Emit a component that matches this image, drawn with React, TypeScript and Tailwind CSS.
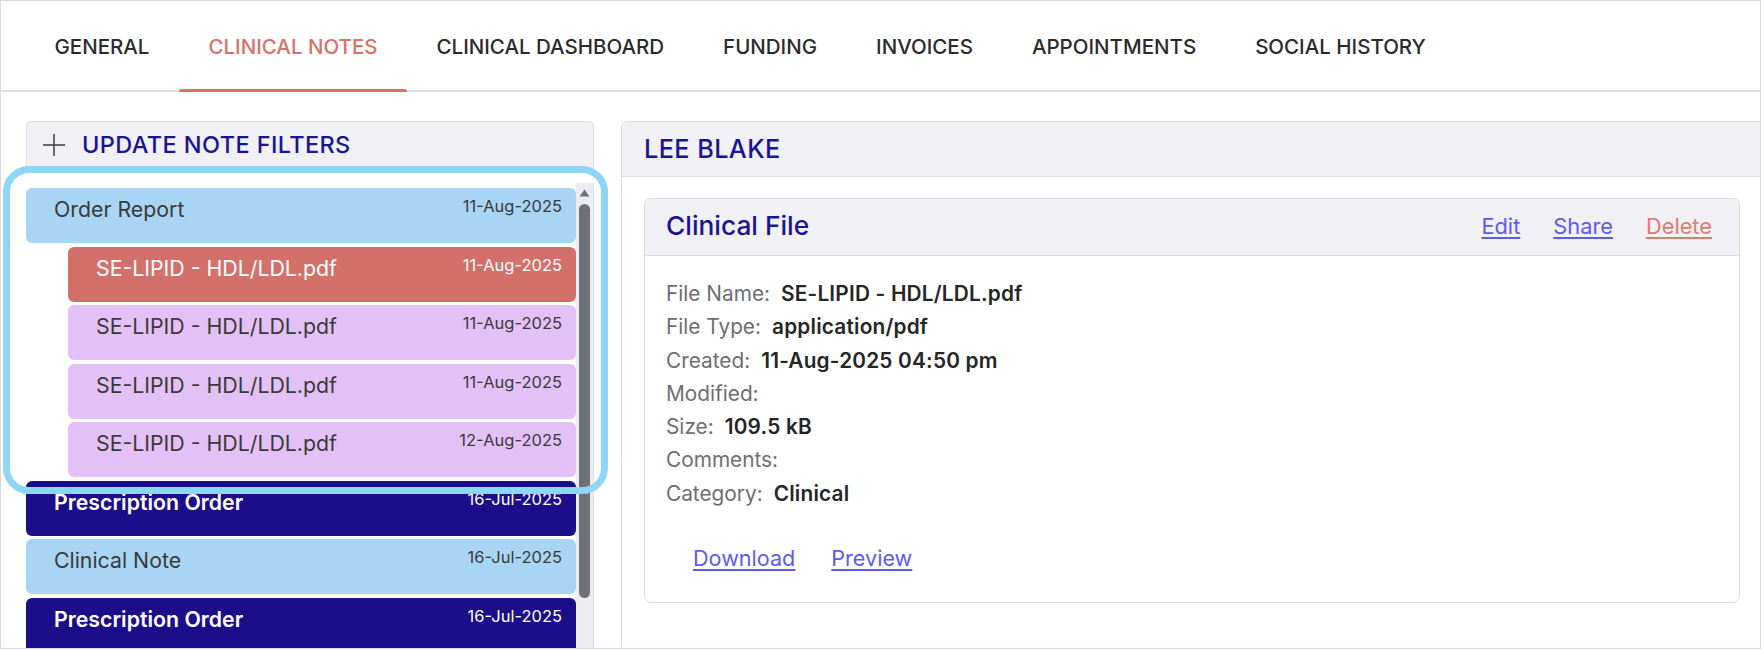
import React from "react";

type Kind = "parent" | "active" | "child" | "navy";

const notes: { label: string; date: string; kind: Kind }[] = [
  { label: "Order Report", date: "11-Aug-2025", kind: "parent" },
  { label: "SE-LIPID - HDL/LDL.pdf", date: "11-Aug-2025", kind: "active" },
  { label: "SE-LIPID - HDL/LDL.pdf", date: "11-Aug-2025", kind: "child" },
  { label: "SE-LIPID - HDL/LDL.pdf", date: "11-Aug-2025", kind: "child" },
  { label: "SE-LIPID - HDL/LDL.pdf", date: "12-Aug-2025", kind: "child" },
  { label: "Prescription Order", date: "16-Jul-2025", kind: "navy" },
  { label: "Clinical Note", date: "16-Jul-2025", kind: "parent" },
  { label: "Prescription Order", date: "16-Jul-2025", kind: "navy" },
];

const kindClass: Record<Kind, string> = {
  parent: "bg-[#a7d5f3] text-[#3a3a3a]",
  active: "ml-[42px] bg-[#d4706a] text-white",
  child: "ml-[42px] bg-[#e3c1f7] text-[#3a3a3a]",
  navy: "bg-[#1c0d8a] text-white",
};

const tabs = [
  "GENERAL",
  "CLINICAL NOTES",
  "CLINICAL DASHBOARD",
  "FUNDING",
  "INVOICES",
  "APPOINTMENTS",
  "SOCIAL HISTORY",
];

const details: [string, string][] = [
  ["File Name:", "SE-LIPID - HDL/LDL.pdf"],
  ["File Type:", "application/pdf"],
  ["Created:", "11-Aug-2025 04:50 pm"],
  ["Modified:", ""],
  ["Size:", "109.5 kB"],
  ["Comments:", ""],
  ["Category:", "Clinical"],
];

function NoteRow({ label, date, kind }: { label: string; date: string; kind: Kind }) {
  return (
    <div
      className={`flex h-[55px] shrink-0 items-start justify-between rounded-[6px] pl-[28px] pr-[14px] pt-[6px] ${kindClass[kind]}`}
    >
      <span className={`text-[21.3px] leading-[1.5] ${kind === "navy" ? "font-semibold" : ""}`}>
        {label}
      </span>
      <span className="text-[16.5px] leading-[1.5]">{date}</span>
    </div>
  );
}

export default function App() {
  return (
    <div
      className="relative h-[649px] w-[1761px] overflow-hidden border border-[#d9d9dd] bg-white"
      style={{ fontFamily: "Inter, 'Noto Sans', sans-serif" }}
    >
      {/* Tabs */}
      <nav className="flex h-[91px] border-b-2 border-[#e1e1e7] pl-[24px]">
        {tabs.map((t) => (
          <div
            key={t}
            className={`relative flex h-full items-center px-[29.5px] pt-[4px] text-[20.5px] font-medium ${
              t === "CLINICAL NOTES" ? "text-[#d6716b]" : "text-[#2b2b2b]"
            }`}
          >
            {t}
            {t === "CLINICAL NOTES" && (
              <div className="absolute -bottom-[2px] left-0 h-[3px] w-full rounded-t-[2px] bg-[#d6716b]" />
            )}
          </div>
        ))}
      </nav>

      <div className="flex pt-[29px] pl-[25px]">
        {/* Left column */}
        <div className="flex w-[568px] shrink-0 flex-col">
          <div className="flex h-[49px] items-center rounded-t-[5px] border border-b-0 border-[#dcdce4] bg-[#f0f0f5] pb-[2px] pl-[15px]">
            <svg width="24" height="24" viewBox="0 0 24 24" className="mr-[16px]">
              <path d="M12 1v22M1 12h22" stroke="#3d3d3d" strokeWidth="1.5" fill="none" />
            </svg>
            <span className="text-[23.5px] font-medium tracking-[0.4px] text-[#1b1490]">
              UPDATE NOTE FILTERS
            </span>
          </div>
          <div className="mt-[13px] flex h-[520px]">
            <div className="flex w-[550px] flex-col gap-[3.5px] pt-[5px]">
              {notes.map((n, i) => (
                <NoteRow key={i} {...n} />
              ))}
            </div>
            <div className="flex w-[18px] flex-col items-center border-r border-[#dedee4] bg-[#ececf0] pt-[6px]">
              <svg width="11" height="8" viewBox="0 0 11 8">
                <path d="M5.5 0.5L10.5 7.5H0.5Z" fill="#6c7177" />
              </svg>
              <div className="mt-[7px] h-[394px] w-[11px] rounded-full bg-[#6c7177]" />
            </div>
          </div>
        </div>

        {/* Right column */}
        <div className="ml-[27px] flex-1 rounded-tl-[6px] border-l border-t border-[#dcdce4]">
          <div className="flex h-[55px] items-center border-b border-[#dcdce4] bg-[#f0f0f5] pl-[22px]">
            <span className="text-[25.3px] font-medium tracking-[0.4px] text-[#1b1490]">LEE BLAKE</span>
          </div>
          <div className="ml-[22px] mr-[20px] mt-[21px] rounded-[7px] border border-[#d9d9e1]">
            <div className="flex h-[57px] items-center justify-between rounded-t-[7px] border-b border-[#dcdce4] bg-[#f0f0f5] pb-[2px] pl-[21px] pr-[27px]">
              <span className="text-[26.3px] font-medium text-[#1b1490]">Clinical File</span>
              <div className="flex gap-[33px] text-[21.8px]">
                <a href="#" className="text-[#5b5bf0] underline underline-offset-[3px]">Edit</a>
                <a href="#" className="text-[#5b5bf0] underline underline-offset-[3px]">Share</a>
                <a href="#" className="text-[#e07b70] underline underline-offset-[3px]">Delete</a>
              </div>
            </div>
            <div className="pl-[21px] pt-[21px] pb-[27px]">
              {details.map(([k, v]) => (
                <div key={k} className="flex text-[20.8px] leading-[33.3px]">
                  <span className="mr-[11px] text-[#6e6e72]">{k}</span>
                  <span className="font-semibold tracking-[0.2px] text-[#262626]">{v}</span>
                </div>
              ))}
              <div className="mt-[32px] flex gap-[36px] pl-[27px] text-[21.6px] leading-[33px]">
                <a href="#" className="text-[#5b5bf0] underline underline-offset-[3px]">Download</a>
                <a href="#" className="text-[#5b5bf0] underline underline-offset-[3px]">Preview</a>
              </div>
            </div>
          </div>
        </div>
      </div>

      {/* Highlight outline */}
      <div className="pointer-events-none absolute left-[2px] top-[165px] h-[328px] w-[605px] rounded-[26px] border-[7px] border-[#8ed5f6]" />
    </div>
  );
}
